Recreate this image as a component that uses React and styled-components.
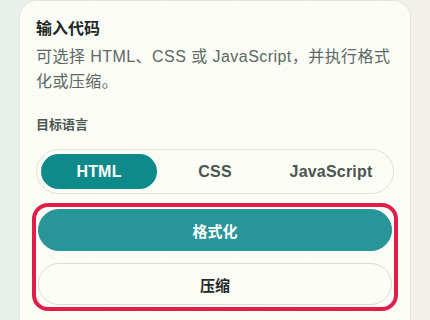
import React, { useState } from "react";
import styled, { createGlobalStyle } from "styled-components";

const GlobalStyle = createGlobalStyle`
  * { box-sizing: border-box; }
  html, body { margin: 0; padding: 0; }
  body {
    width: 430px;
    height: 320px;
    overflow: hidden;
    font-family: "Liberation Sans", "Noto Sans CJK SC", sans-serif;
    background: linear-gradient(90deg, #e8f0ec 0%, #eef1ec 50%, #f1f1ea 100%);
  }
`;

const Page = styled.div`
  padding: 0 19px;
  height: 320px;
  overflow: hidden;
`;

const Card = styled.section`
  min-height: 100%;
  background-color: #fdfdf8;
  background-image: radial-gradient(#efede4 0.7px, transparent 1px);
  background-size: 9px 9px;
  border: 1px solid #e6e4da;
  border-bottom: none;
  border-radius: 18px 18px 0 0;
  padding: 16px 16px 0;
  display: flex;
  flex-direction: column;
`;

const Title = styled.h2`
  margin: 0;
  font-size: 16px;
  line-height: 24px;
  font-weight: 700;
  color: #1f2825;
`;

const Description = styled.p`
  margin: 3px 0 0;
  font-size: 16px;
  line-height: 25px;
  letter-spacing: 0.45px;
  color: #5b6762;
`;

const Label = styled.div`
  margin-top: 21px;
  font-size: 13px;
  line-height: 20px;
  font-weight: 700;
  color: #4c5752;
`;

const Segmented = styled.div`
  margin-top: 14px;
  height: 45px;
  border: 1px solid #e3e1d7;
  border-radius: 23px;
  padding: 4px;
  display: grid;
  grid-template-columns: repeat(3, 1fr);
`;

const Segment = styled.button`
  border: none;
  border-radius: 18px;
  font-family: inherit;
  font-size: 16px;
  letter-spacing: 0.2px;
  font-weight: 700;
  cursor: pointer;
  background: ${(p) => (p.$active ? "#0f8a8a" : "transparent")};
  color: ${(p) => (p.$active ? "#ffffff" : "#4a5550")};
`;

const Actions = styled.div`
  margin-top: 13px;
  padding: 2px;
  border-radius: 12px;
  outline: 4px solid #e11d4a;
  display: flex;
  flex-direction: column;
  gap: 12px;
`;

const ActionButton = styled.button`
  height: 42px;
  border-radius: 21px;
  font-family: inherit;
  font-size: 15px;
  font-weight: 700;
  cursor: pointer;
  border: 1px solid ${(p) => (p.$primary ? "#289598" : "#dedcd2")};
  background: ${(p) => (p.$primary ? "#289598" : "#fdfdf8")};
  color: ${(p) => (p.$primary ? "#ffffff" : "#1f2825")};
`;

const languages = ["HTML", "CSS", "JavaScript"];

export default function App() {
  const [lang, setLang] = useState("HTML");
  return (
    <>
      <GlobalStyle />
      <Page>
        <Card>
          <Title>输入代码</Title>
          <Description>
            可选择 HTML、CSS 或 JavaScript，并执行格式化或压缩。
          </Description>
          <Label>目标语言</Label>
          <Segmented>
            {languages.map((l) => (
              <Segment key={l} $active={l === lang} onClick={() => setLang(l)}>
                {l}
              </Segment>
            ))}
          </Segmented>
          <Actions>
            <ActionButton $primary>格式化</ActionButton>
            <ActionButton>压缩</ActionButton>
          </Actions>
        </Card>
      </Page>
    </>
  );
}
